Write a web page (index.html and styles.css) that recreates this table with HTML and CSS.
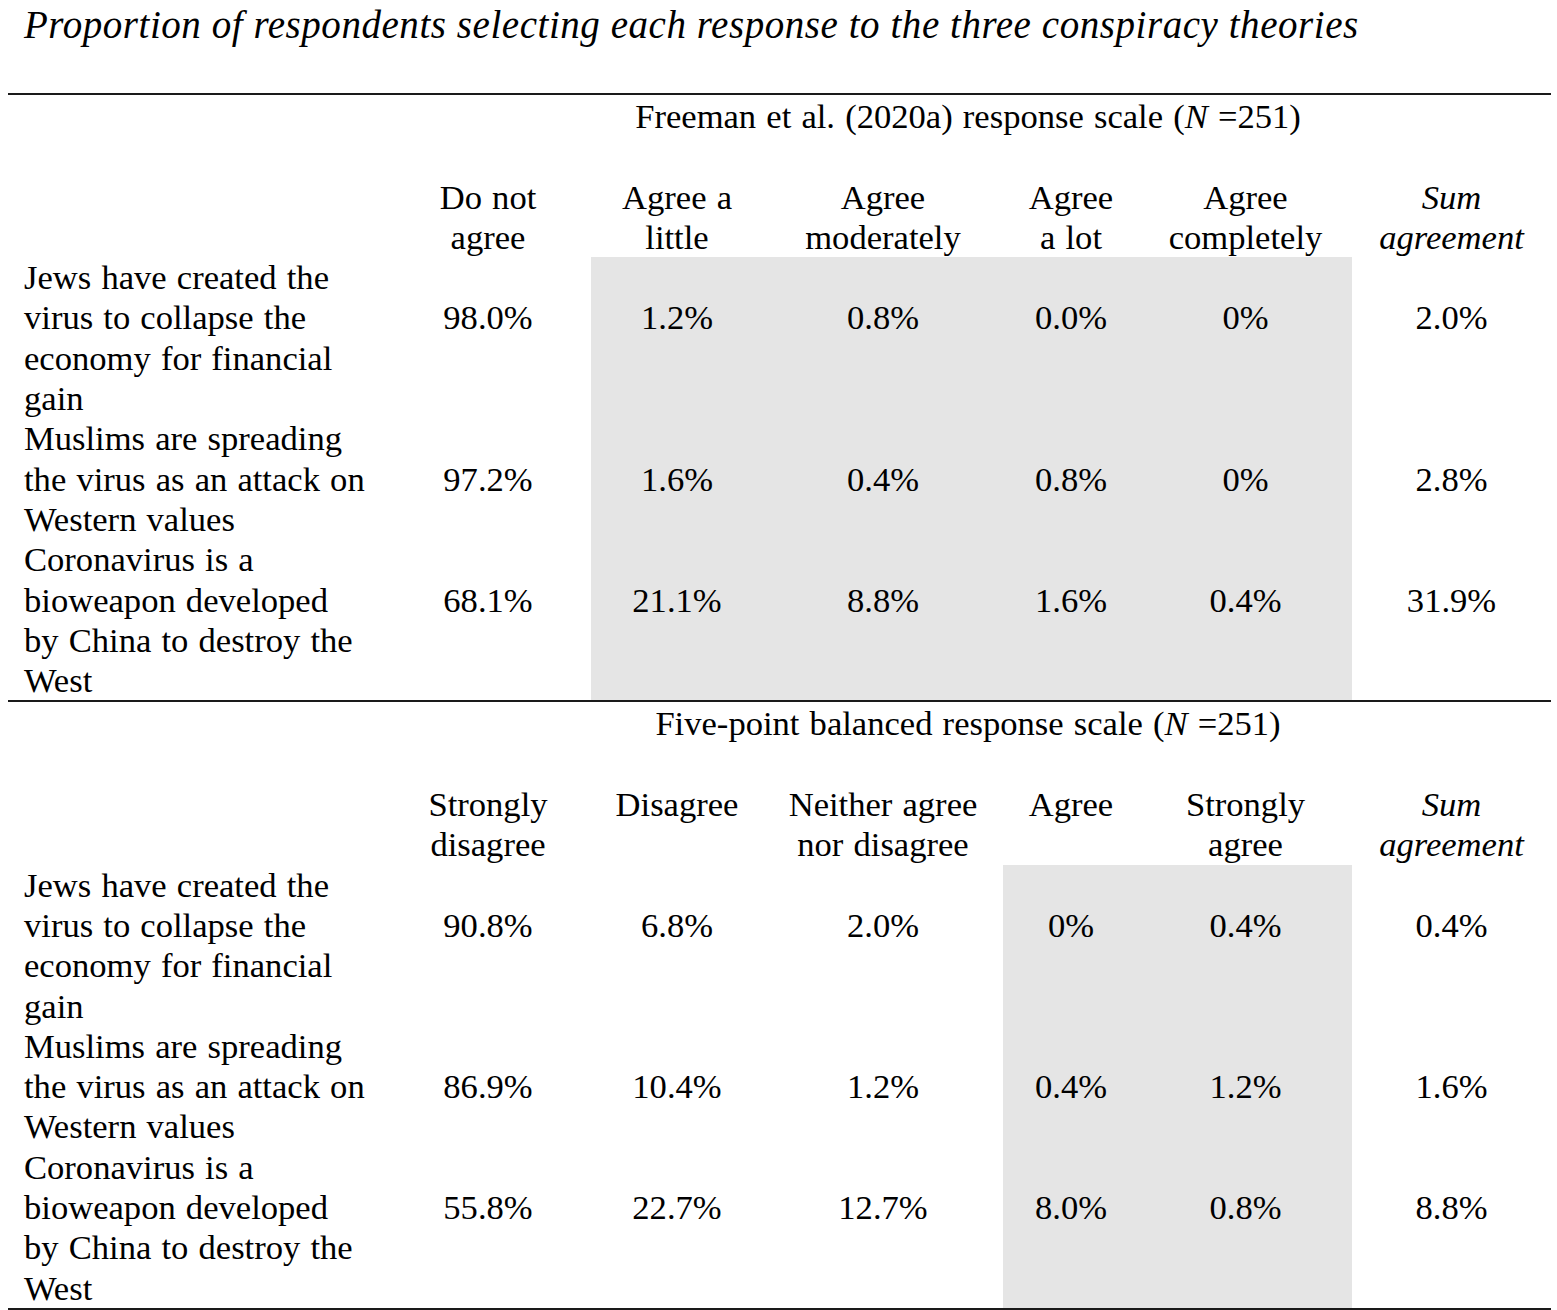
FILE: index.html
```html
<!DOCTYPE html>
<html>
<head>
<meta charset="utf-8">
<link rel="stylesheet" href="styles.css">
</head>
<body>
<h1 class="title">Proportion of respondents selecting each response to the three conspiracy theories</h1>
<table class="t">
<colgroup>
<col class="c0"><col class="c1"><col class="c2"><col class="c3"><col class="c4"><col class="c5"><col class="c6">
</colgroup>
<tbody class="sec">
<tr class="span"><td></td><td colspan="6">Freeman et al. (2020a) response scale (<i>N</i> =251)</td></tr>
<tr class="head"><td></td><td>Do not<br>agree</td><td>Agree a<br>little</td><td>Agree<br>moderately</td><td>Agree<br>a lot</td><td>Agree<br>completely</td><td><i>Sum<br>agreement</i></td></tr>
<tr><td class="lbl">Jews have created the<br>virus to collapse the<br>economy for financial<br>gain</td><td class="v">98.0%</td><td class="v sh">1.2%</td><td class="v sh">0.8%</td><td class="v sh">0.0%</td><td class="v sh">0%</td><td class="v">2.0%</td></tr>
<tr><td class="lbl">Muslims are spreading<br>the virus as an attack on<br>Western values</td><td class="v">97.2%</td><td class="v sh">1.6%</td><td class="v sh">0.4%</td><td class="v sh">0.8%</td><td class="v sh">0%</td><td class="v">2.8%</td></tr>
<tr class="last"><td class="lbl">Coronavirus is a<br>bioweapon developed<br>by China to destroy the<br>West</td><td class="v">68.1%</td><td class="v sh">21.1%</td><td class="v sh">8.8%</td><td class="v sh">1.6%</td><td class="v sh">0.4%</td><td class="v">31.9%</td></tr>
</tbody>
<tbody class="sec">
<tr class="span"><td></td><td colspan="6">Five-point balanced response scale (<i>N</i> =251)</td></tr>
<tr class="head"><td></td><td>Strongly<br>disagree</td><td>Disagree</td><td>Neither agree<br>nor disagree</td><td>Agree</td><td>Strongly<br>agree</td><td><i>Sum<br>agreement</i></td></tr>
<tr><td class="lbl">Jews have created the<br>virus to collapse the<br>economy for financial<br>gain</td><td class="v">90.8%</td><td class="v">6.8%</td><td class="v">2.0%</td><td class="v sh">0%</td><td class="v sh">0.4%</td><td class="v">0.4%</td></tr>
<tr><td class="lbl">Muslims are spreading<br>the virus as an attack on<br>Western values</td><td class="v">86.9%</td><td class="v">10.4%</td><td class="v">1.2%</td><td class="v sh">0.4%</td><td class="v sh">1.2%</td><td class="v">1.6%</td></tr>
<tr class="last"><td class="lbl">Coronavirus is a<br>bioweapon developed<br>by China to destroy the<br>West</td><td class="v">55.8%</td><td class="v">22.7%</td><td class="v">12.7%</td><td class="v sh">8.0%</td><td class="v sh">0.8%</td><td class="v">8.8%</td></tr>
</tbody>
</table>
</body>
</html>
```

FILE: styles.css
```css
html, body {
  margin: 0;
  padding: 0;
  background: #fff;
}
body {
  font-family: "Liberation Serif", "Times New Roman", serif;
  font-size: 34.6px;
  line-height: 40.3px;
  color: #000;
}
.title {
  margin: 5px 0 0 24px;
  font-size: 39px;
  line-height: 40.4px;
  letter-spacing: 0.55px;
  font-weight: normal;
  font-style: italic;
}
.t {
  margin: 47.6px 0 0 8px;
  width: 1543px;
  table-layout: fixed;
  border-collapse: collapse;
  font-size: 34.6px;
  line-height: 40.3px;
  word-spacing: 1.5px;
}
.c0 { width: 377px; }
.c1 { width: 206px; }
.c2 { width: 172px; }
.c3 { width: 240px; }
.c4 { width: 136px; }
.c5 { width: 213px; }
.c6 { width: 199px; }
.t td {
  padding: 0;
  vertical-align: top;
  text-align: center;
  white-space: nowrap;
}
.t td.lbl {
  text-align: left;
  padding-left: 16px;
}
.t td.v {
  padding-top: 40.3px;
}
.t td.sh {
  background: #e5e5e5;
}
.span td {
  border-top: 2px solid #1a1a1a;
  padding-top: 1px;
  padding-bottom: 40.3px;
}
.sec:last-child .last td {
  border-bottom: 2px solid #1a1a1a;
}
```
